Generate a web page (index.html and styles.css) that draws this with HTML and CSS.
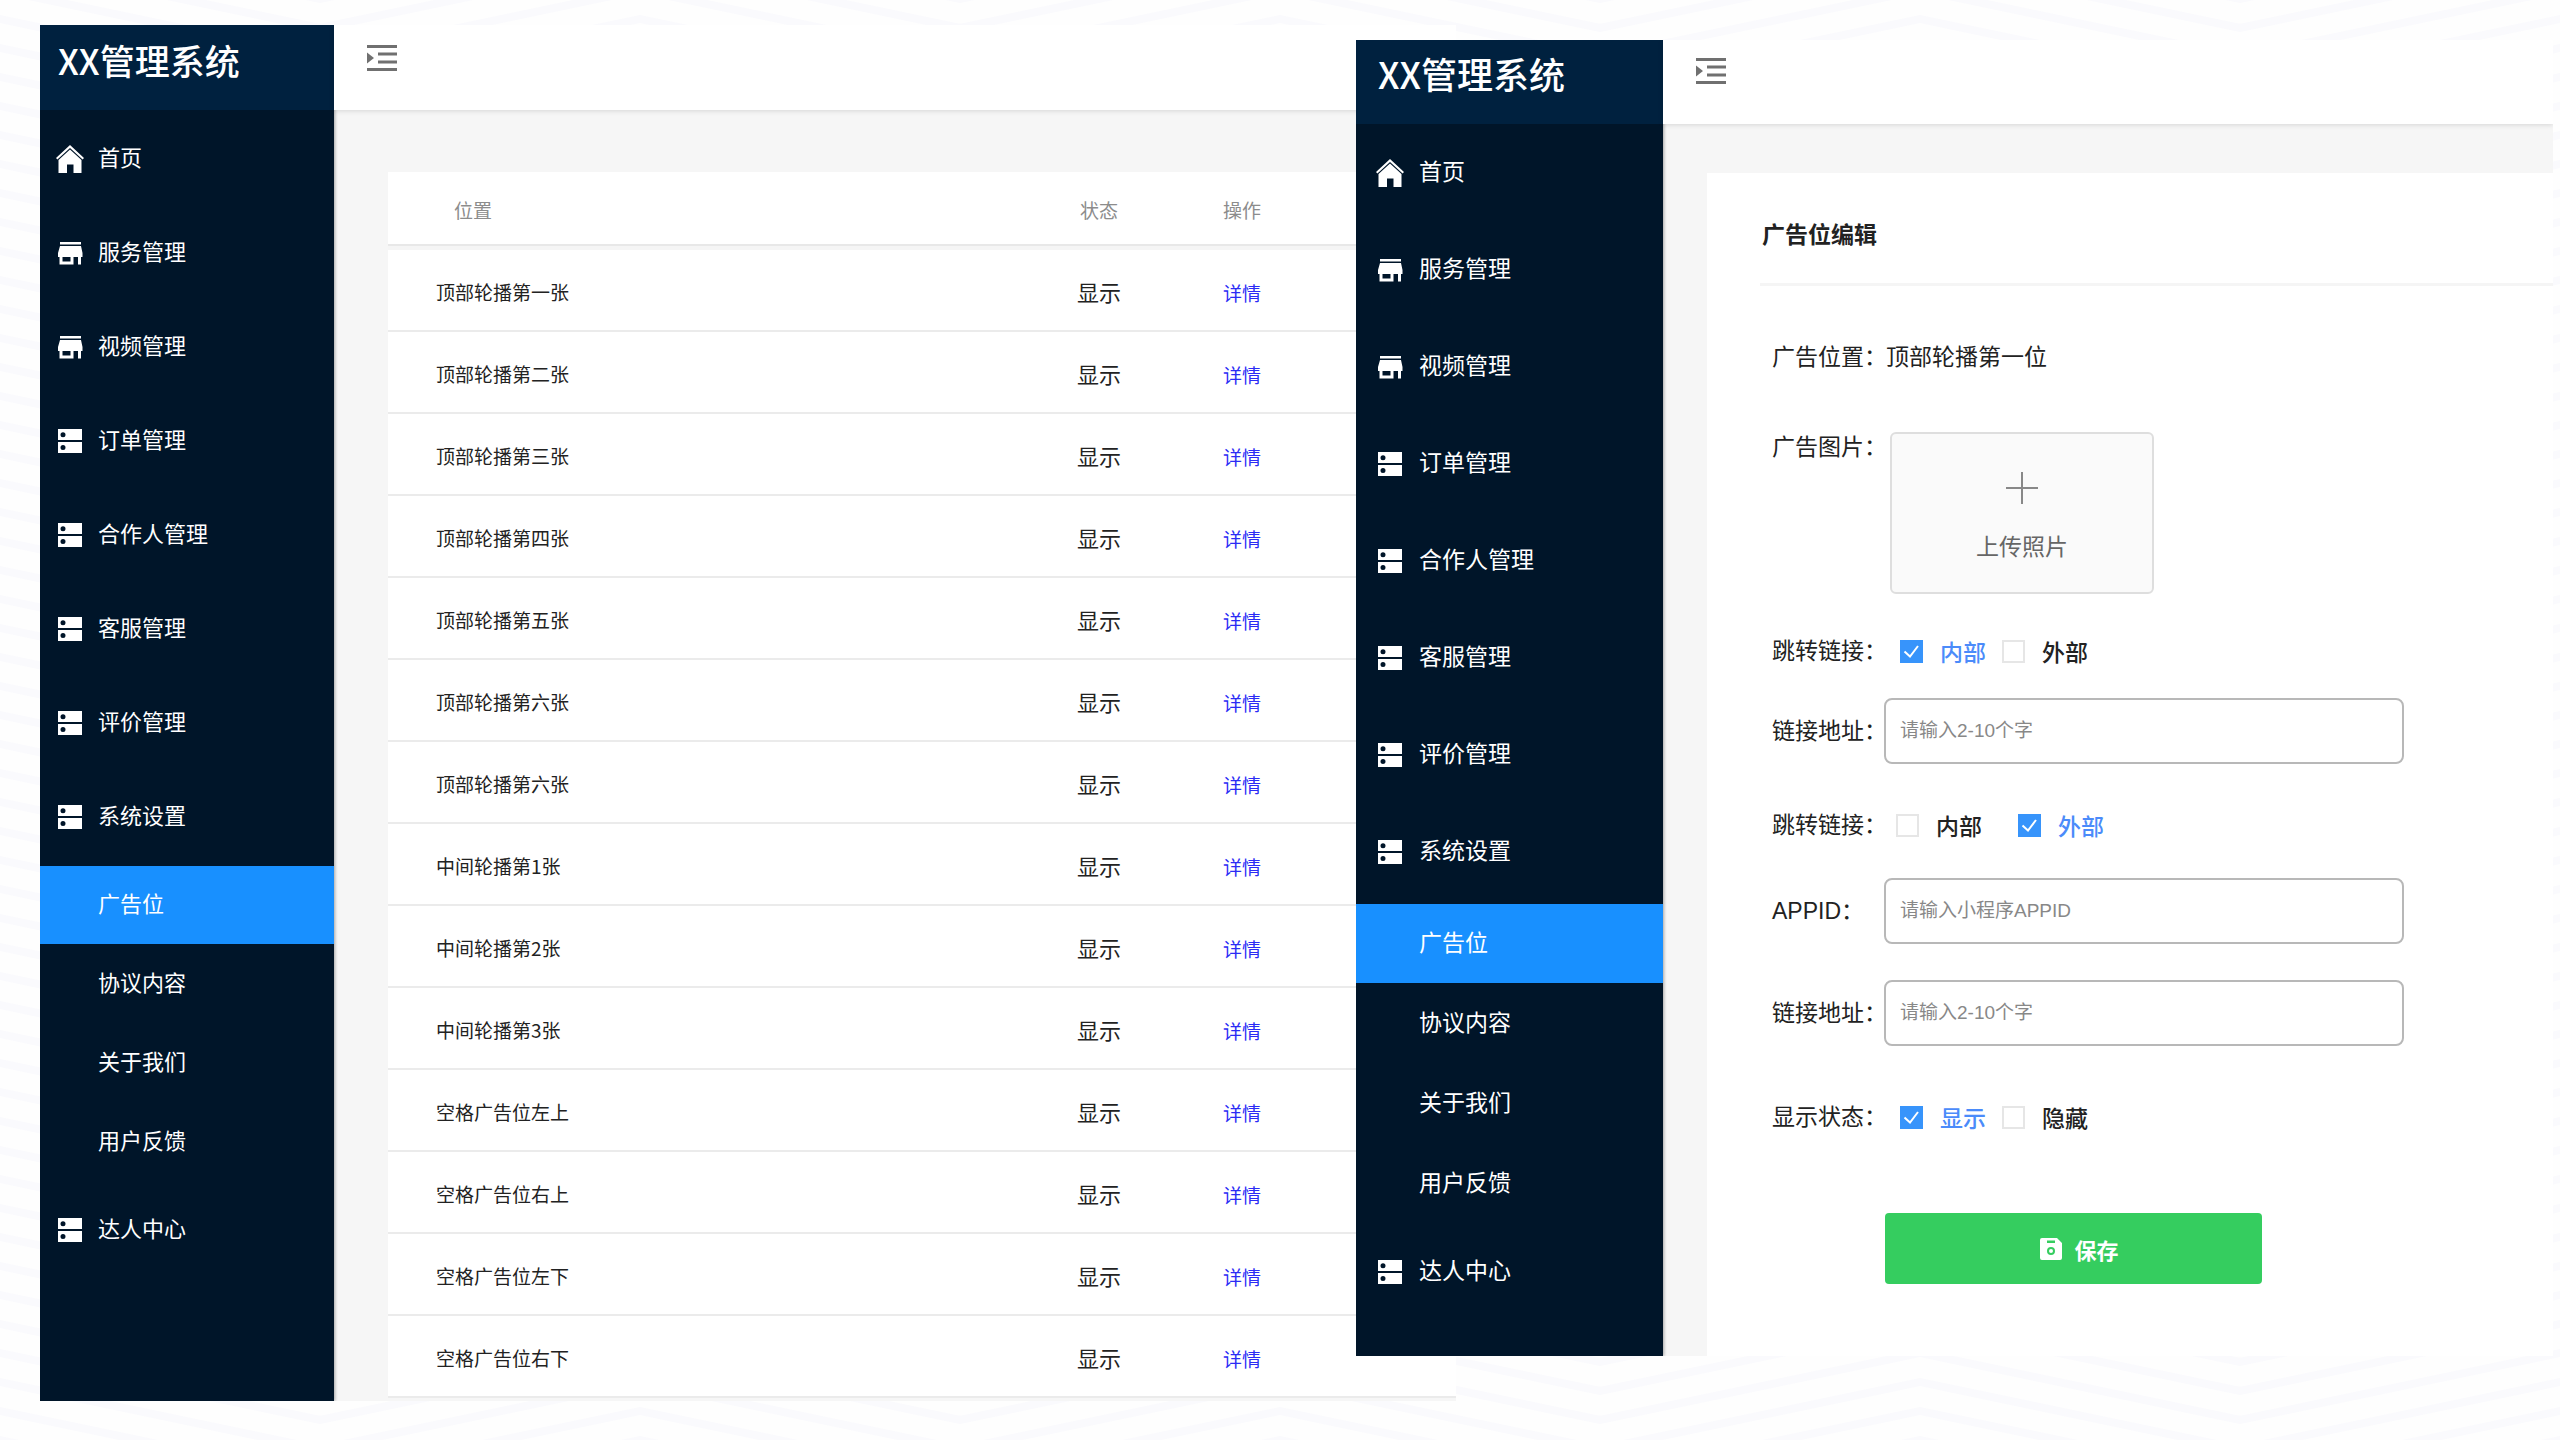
FILE: index.html
```html
<!DOCTYPE html>
<html lang="zh-CN">
<head>
<meta charset="utf-8">
<title>XX管理系统</title>
<link rel="stylesheet" href="styles.css">
</head>
<body>
<svg class="sprite" aria-hidden="true">
  <symbol id="i-home" viewBox="0 0 28 28"><path d="M14 0 L28 13 L26.600 14.600 L14 3 L1.400 14.600 L0 13 Z M14 4.500 L25.500 15 V28 H17.500 V19.500 H11 V28 H2.500 V15 Z"/></symbol>
  <symbol id="i-shop" viewBox="0 0 28 28"><path d="M4 3h21v2.500H4z M4 7h21l1.500 7v4H25v7.500h-3V18h-4.500v7.500H3.500V18H2v-4z M6.500 18v4.500h8V18z" fill-rule="evenodd"/></symbol>
  <symbol id="i-list" viewBox="0 0 28 28"><path d="M2 2h24v11H2z M7 5.200a2.500 2.500 0 1 0 0 5a2.500 2.500 0 1 0 0-5z M2 15h24v11H2z M7 18a2.500 2.500 0 1 0 0 5a2.500 2.500 0 1 0 0-5z" fill-rule="evenodd"/></symbol>
  <symbol id="i-fold" viewBox="0 0 30 26"><path d="M0 0h30v3H0z M11 7.500h19v3H11z M11 15.500h19v3H11z M0 23h30v3H0z M0 7.500l7 5.500l-7 5.500z"/></symbol>
</svg>

<main class="stage">
  <section class="window window-list">
    <aside class="sidebar">
      <h1 class="brand">XX管理系统</h1>
      <nav class="menu">
        <a class="item" href="#"><svg><use href="#i-home"/></svg>首页</a>
        <a class="item" href="#"><svg><use href="#i-shop"/></svg>服务管理</a>
        <a class="item" href="#"><svg><use href="#i-shop"/></svg>视频管理</a>
        <a class="item" href="#"><svg><use href="#i-list"/></svg>订单管理</a>
        <a class="item" href="#"><svg><use href="#i-list"/></svg>合作人管理</a>
        <a class="item" href="#"><svg><use href="#i-list"/></svg>客服管理</a>
        <a class="item" href="#"><svg><use href="#i-list"/></svg>评价管理</a>
        <a class="item" href="#"><svg><use href="#i-list"/></svg>系统设置</a>
        <div class="submenu">
          <a class="subitem active" href="#">广告位</a>
          <a class="subitem" href="#">协议内容</a>
          <a class="subitem" href="#">关于我们</a>
          <a class="subitem" href="#">用户反馈</a>
        </div>
        <a class="item" href="#"><svg><use href="#i-list"/></svg>达人中心</a>
      </nav>
    </aside>
    <div class="main">
      <header class="topbar"><button class="fold" type="button" aria-label="收起菜单"><svg><use href="#i-fold"/></svg></button></header>
      <div class="content">
        <table class="ads">
          <colgroup><col><col class="c-status"><col class="c-action"><col class="c-rest"></colgroup>
          <thead><tr><th>位置</th><th>状态</th><th>操作</th><th></th></tr></thead>
          <tbody>
            <tr><td>顶部轮播第一张</td><td>显示</td><td><a href="#">详情</a></td><td></td></tr>
            <tr><td>顶部轮播第二张</td><td>显示</td><td><a href="#">详情</a></td><td></td></tr>
            <tr><td>顶部轮播第三张</td><td>显示</td><td><a href="#">详情</a></td><td></td></tr>
            <tr><td>顶部轮播第四张</td><td>显示</td><td><a href="#">详情</a></td><td></td></tr>
            <tr><td>顶部轮播第五张</td><td>显示</td><td><a href="#">详情</a></td><td></td></tr>
            <tr><td>顶部轮播第六张</td><td>显示</td><td><a href="#">详情</a></td><td></td></tr>
            <tr><td>顶部轮播第六张</td><td>显示</td><td><a href="#">详情</a></td><td></td></tr>
            <tr><td>中间轮播第1张</td><td>显示</td><td><a href="#">详情</a></td><td></td></tr>
            <tr><td>中间轮播第2张</td><td>显示</td><td><a href="#">详情</a></td><td></td></tr>
            <tr><td>中间轮播第3张</td><td>显示</td><td><a href="#">详情</a></td><td></td></tr>
            <tr><td>空格广告位左上</td><td>显示</td><td><a href="#">详情</a></td><td></td></tr>
            <tr><td>空格广告位右上</td><td>显示</td><td><a href="#">详情</a></td><td></td></tr>
            <tr><td>空格广告位左下</td><td>显示</td><td><a href="#">详情</a></td><td></td></tr>
            <tr><td>空格广告位右下</td><td>显示</td><td><a href="#">详情</a></td><td></td></tr>
          </tbody>
        </table>
      </div>
    </div>
  </section>

  <section class="window window-edit">
    <aside class="sidebar">
      <h1 class="brand">XX管理系统</h1>
      <nav class="menu">
        <a class="item" href="#"><svg><use href="#i-home"/></svg>首页</a>
        <a class="item" href="#"><svg><use href="#i-shop"/></svg>服务管理</a>
        <a class="item" href="#"><svg><use href="#i-shop"/></svg>视频管理</a>
        <a class="item" href="#"><svg><use href="#i-list"/></svg>订单管理</a>
        <a class="item" href="#"><svg><use href="#i-list"/></svg>合作人管理</a>
        <a class="item" href="#"><svg><use href="#i-list"/></svg>客服管理</a>
        <a class="item" href="#"><svg><use href="#i-list"/></svg>评价管理</a>
        <a class="item" href="#"><svg><use href="#i-list"/></svg>系统设置</a>
        <div class="submenu">
          <a class="subitem active" href="#">广告位</a>
          <a class="subitem" href="#">协议内容</a>
          <a class="subitem" href="#">关于我们</a>
          <a class="subitem" href="#">用户反馈</a>
        </div>
        <a class="item" href="#"><svg><use href="#i-list"/></svg>达人中心</a>
      </nav>
    </aside>
    <div class="main">
      <header class="topbar"><button class="fold" type="button" aria-label="收起菜单"><svg><use href="#i-fold"/></svg></button></header>
      <div class="content">
        <div class="card">
          <h2 class="card-title">广告位编辑</h2>
          <form class="form">
            <div class="row"><span class="label">广告位置：</span><span class="value">顶部轮播第一位</span></div>
            <div class="row row-upload">
              <span class="label">广告图片：</span>
              <button class="upload" type="button"><svg viewBox="0 0 32 32"><path d="M16 0V32M0 16H32"/></svg>上传照片</button>
            </div>
            <div class="row row-link">
              <span class="label">跳转链接：</span>
              <div class="checks">
                <label class="check"><input type="checkbox" checked><span>内部</span></label>
                <label class="check"><input type="checkbox"><span>外部</span></label>
              </div>
            </div>
            <div class="row row-address"><label class="label" for="url1">链接地址：</label><input class="text" id="url1" type="text" placeholder="请输入2-10个字"></div>
            <div class="row row-mini">
              <span class="label">跳转链接：</span>
              <div class="checks checks-wide">
                <label class="check"><input type="checkbox"><span>内部</span></label>
                <label class="check"><input type="checkbox" checked><span>外部</span></label>
              </div>
            </div>
            <div class="row row-appid"><label class="label" for="appid">APPID：</label><input class="text" id="appid" type="text" placeholder="请输入小程序APPID"></div>
            <div class="row row-path"><label class="label" for="url2">链接地址：</label><input class="text" id="url2" type="text" placeholder="请输入2-10个字"></div>
            <div class="row row-state">
              <span class="label">显示状态：</span>
              <div class="checks">
                <label class="check"><input type="checkbox" checked><span>显示</span></label>
                <label class="check"><input type="checkbox"><span>隐藏</span></label>
              </div>
            </div>
            <button class="save" type="button"><svg viewBox="0 0 22 22"><path fill-rule="evenodd" d="M2 0H17L22 5V20a2 2 0 0 1-2 2H2a2 2 0 0 1-2-2V2a2 2 0 0 1 2-2z M7 2.500v2.500h8V2.500z M11 9a4 4 0 1 0 0 8a4 4 0 1 0 0-8z M11 11a2 2 0 1 1 0 4a2 2 0 1 1 0-4z"/></svg>保存</button>
          </form>
        </div>
      </div>
    </div>
  </section>
</main>
</body>
</html>
```
FILE: styles.css
```css
* { box-sizing: border-box; }

body {
  margin: 0;
  min-height: 100vh;
  font-family: "Liberation Sans", "Noto Sans CJK SC", sans-serif;
  color: #222;
  background-color: #fefefe;
  background-image: url("data:image/svg+xml,%3Csvg xmlns='http://www.w3.org/2000/svg' width='640' height='29'%3E%3Cg fill='none' stroke='%23fafafd' stroke-width='8'%3E%3Cpath d='M-320 57L0 -10L320 57L640 -10L960 57M-320 86L0 19L320 86L640 19L960 86M-320 28L0 -39L320 28L640 -39L960 28M-320 -1L0 -68L320 -1L640 -68L960 -1M-320 115L0 48L320 115L640 48L960 115'/%3E%3C/g%3E%3C/svg%3E");
}

h1, h2 { margin: 0; }
a { color: inherit; text-decoration: none; }
button { font: inherit; color: inherit; cursor: pointer; }
.sprite { display: none; }

/* two overlapping windows share one grid row */
.stage {
  display: grid;
  grid-template-columns: 40px 1316fr 100fr 1097fr 7px;
  align-items: start;
  padding: 25px 0 39px;
}

.window { display: grid; grid-row: 1; overflow: hidden; background: #f6f6f6; }

.window-list {
  --item: 94px;
  --item-pad: 3px;
  --sub: 78px;
  --text: 22px;
  --lead: 16px;
  --gap: 14px;
  --bar: 85px;
  --bar-pad: 20px;
  --brand: 35px;
  --brand-line: 70px;
  --brand-lead: 18px;
  grid-column: 2 / 4;
  grid-template-columns: 294px 1fr;
}

.window-edit {
  --item: 97px;
  --item-pad: 6px;
  --sub: 79px;
  --text: 23px;
  --lead: 20px;
  --gap: 15px;
  --bar: 84px;
  --bar-pad: 18px;
  --brand: 36px;
  --brand-line: 66px;
  --brand-lead: 22px;
  grid-column: 3 / 5;
  grid-template-columns: 307px 1fr;
  margin-top: 15px;
}

.sidebar { background: #001529; color: #fff; box-shadow: 1px 0 3px #0005; }

.brand {
  height: var(--bar);
  padding-left: var(--brand-lead);
  font-family: "Noto Sans CJK SC", sans-serif;
  font-size: var(--brand);
  font-weight: 500;
  line-height: var(--brand-line);
  background: #00213f;
}

.menu { display: flex; flex-direction: column; font-size: var(--text); }

.item {
  display: flex;
  align-items: center;
  gap: var(--gap);
  height: var(--item);
  padding-left: var(--lead);
  padding-bottom: var(--item-pad);
}
.item svg { width: 28px; height: 28px; margin-top: 6px; fill: #fff; }

.submenu { display: flex; flex-direction: column; gap: 1px; margin-top: 4px; }
.subitem {
  height: var(--sub);
  padding-left: calc(var(--lead) + 28px + var(--gap));
  line-height: var(--sub);
}
.active { background: #1890ff; }

.main { display: flex; flex-direction: column; min-width: 0; }

.topbar {
  height: var(--bar);
  padding: var(--bar-pad) 33px;
  background: #fff;
  box-shadow: 0 1px 5px #0002;
}
.fold { display: block; padding: 0; border: 0; background: none; }
.fold svg { display: block; width: 30px; height: 26px; fill: #707070; }

.window-list .content { padding: 62px 0 3px 54px; }
.window-edit .content { padding: 49px 0 0 44px; }

/* ad slot list */
.ads {
  width: 100%;
  table-layout: fixed;
  border-spacing: 0;
  background: #fff;
  font-family: "Noto Sans CJK SC", sans-serif;
  font-size: 19px;
  text-align: center;
}
.c-status, .c-rest { width: 142px; }
.c-action { width: 144px; }
.ads th {
  height: 78px;
  padding: 0;
  border-bottom: 4px solid #f5f5f5;
  box-shadow: inset 0 -2px #e8e8e8;
  color: #8c8c8c;
  font-weight: 400;
}
.ads td { height: 82px; padding: 2px 0 0; border-bottom: 2px solid #ebebeb; }
.ads th:first-child { padding-left: 66px; text-align: left; }
.ads td:first-child { padding-left: 48px; text-align: left; }
.ads td:nth-child(2) { font-size: 22px; }
.ads td:nth-child(3) { padding-top: 4px; }
.ads a { color: #2b2bf5; }

/* ad slot editor */
.card { padding: 38px 0 72px 53px; background: #fff; }
.card-title {
  height: 75px;
  padding-left: 2px;
  border-bottom: 3px solid #f5f5f5;
  font-size: 23px;
  line-height: 48px;
}
.form {
  display: flex;
  flex-direction: column;
  align-items: flex-start;
  padding: 56px 0 0 12px;
  font-size: 23px;
}
.row { display: flex; align-items: center; line-height: 30px; }
.label { width: 112px; white-space: nowrap; }
.value { margin-left: 2px; }

.row-upload { align-items: flex-start; margin-top: 60px; }
.row-link { margin-top: 42px; }
.row-address { margin-top: 32px; }
.row-mini { margin-top: 46px; }
.row-appid { margin-top: 38px; }
.row-path { margin-top: 36px; }
.row-state { margin-top: 56px; }

.upload {
  display: flex;
  flex-direction: column;
  align-items: center;
  gap: 28px;
  width: 264px;
  height: 162px;
  margin-left: 6px;
  padding: 38px 0 0;
  border: 2px solid #dedede;
  border-radius: 6px;
  background: #fafafa;
  color: #666;
}
.upload svg { width: 32px; height: 32px; fill: none; stroke: #888; stroke-width: 2; }

.checks { display: flex; gap: 16px; margin-left: 16px; }
.checks-wide { gap: 36px; margin-left: 12px; }
.check {
  display: flex;
  align-items: center;
  gap: 17px;
  height: 30px;
  font-family: "Noto Sans CJK SC", sans-serif;
  font-weight: 500;
}
.check input {
  appearance: none;
  width: 23px;
  height: 23px;
  margin: 0;
  border: 2px solid #e6e6e6;
  background: #fff;
}
.check input:checked {
  border-color: #3794fb;
  background: #3794fb url("data:image/svg+xml,%3Csvg xmlns='http://www.w3.org/2000/svg' viewBox='0 0 19 19'%3E%3Cpath d='M2.500 9.500L8 14.500L16 4' fill='none' stroke='white' stroke-width='2'/%3E%3C/svg%3E") center / contain;
}
.check input:checked + span { color: #4b8bfa; }

.text {
  width: 520px;
  height: 66px;
  padding: 0 14px;
  border: 2px solid #b8b8b8;
  border-radius: 8px;
  background: #fff;
  font: inherit;
  font-size: 19px;
}
.text::placeholder { color: #888; opacity: 1; }

.save {
  display: flex;
  align-items: center;
  justify-content: center;
  gap: 12px;
  width: 377px;
  height: 71px;
  margin: 81px 0 0 113px;
  padding: 0 0 0 12px;
  border: 0;
  border-radius: 4px;
  background: #35cd5f;
  color: #fff;
  font-size: 22px;
  font-weight: 700;
}
.save svg { width: 22px; height: 22px; fill: #fff; }
```
